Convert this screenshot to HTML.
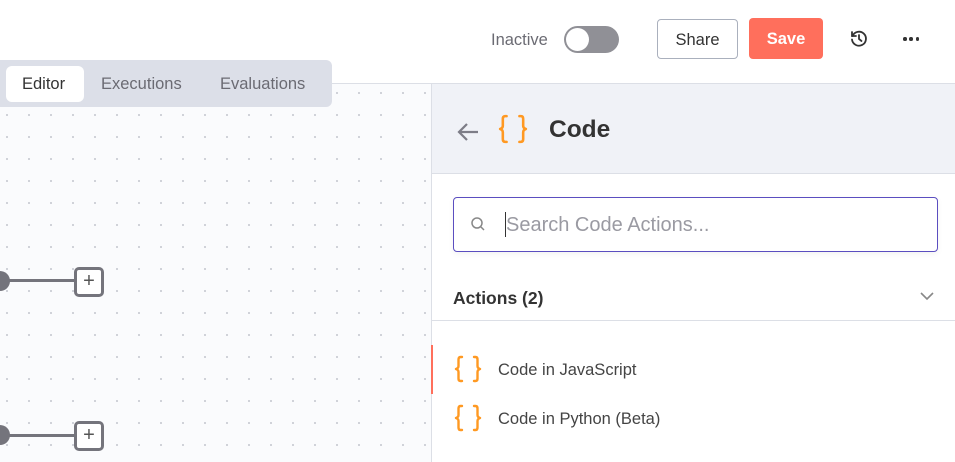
<!DOCTYPE html>
<html><head><style>
*{box-sizing:border-box;margin:0;padding:0}
body{width:955px;height:462px;overflow:hidden;background:#fff;font-family:"Liberation Sans",sans-serif;position:relative;color:#333}
.abs{position:absolute}
.canvas{left:0;top:84px;width:431px;height:378px;background-color:#fafbfd;background-image:radial-gradient(circle,#c4c7cf 0.8px,transparent 1.1px);background-size:22px 22px;background-position:-4px -2px}
</style></head><body>
<svg width="0" height="0" style="position:absolute"><defs><g id="br" fill="none" stroke="#ff9922" stroke-width="2.4" stroke-linecap="round" stroke-linejoin="round"><path d="M8 2H6.5C5 2 4.5 3 4.5 4.5V11C4.5 12.5 3.5 13.5 2 14C3.5 14.5 4.5 15.5 4.5 17V23.5C4.5 25 5 26 6.5 26H8"/><path d="M20 2H21.5C23 2 23.5 3 23.5 4.5V11C23.5 12.5 24.5 13.5 26 14C24.5 14.5 23.5 15.5 23.5 17V23.5C23.5 25 23 26 21.5 26H20"/></g></defs></svg>
<div class="abs" style="left:0;top:83px;width:955px;height:1px;background:#dcdfe6"></div>
<div class="abs canvas"></div>
<div class="abs" style="left:0;top:60px;width:332px;height:47px;background:#dcdfe8;border-radius:0 6px 6px 0"></div>
<div class="abs" style="left:6px;top:66px;width:78px;height:36px;background:#fff;border-radius:6px"></div>
<div class="abs" style="left:22px;top:75px;font-size:16.5px;color:#333">Editor</div>
<div class="abs" style="left:101px;top:75px;font-size:16.5px;color:#6b6b73">Executions</div>
<div class="abs" style="left:220px;top:75px;font-size:16.5px;color:#6b6b73">Evaluations</div>

<div class="abs" style="left:491px;top:31px;font-size:16.5px;color:#6b6b73">Inactive</div>
<div class="abs" style="left:564px;top:26px;width:55px;height:27px;background:#909096;border-radius:14px"></div>
<div class="abs" style="left:566px;top:28px;width:23px;height:23px;background:#fff;border-radius:50%"></div>
<div class="abs" style="left:657px;top:19px;width:81px;height:40px;border:1px solid #aab0bd;border-radius:4px;font-size:16.5px;text-align:center;line-height:40px;color:#333">Share</div>
<div class="abs" style="left:749px;top:18px;width:74px;height:41px;background:#ff6f5c;border-radius:4px;font-size:16.5px;font-weight:bold;text-align:center;line-height:43px;color:#fff">Save</div>
<svg class="abs" style="left:849px;top:29px" width="20" height="20" viewBox="0 0 20 20" fill="none" stroke="#333" stroke-width="1.8" stroke-linecap="round"><path d="M3.5 7A7 7 0 1 1 3 10.5"/><path d="M3 3v4h4"/><path d="M10 6v4l2.5 2"/></svg>
<div class="abs" style="left:903px;top:37px;width:16px;height:4px;display:flex;justify-content:space-between"><i style="width:3.5px;height:3.5px;background:#333;border-radius:50%"></i><i style="width:3.5px;height:3.5px;background:#333;border-radius:50%"></i><i style="width:3.5px;height:3.5px;background:#333;border-radius:50%"></i></div>

<div class="abs" style="left:-10px;top:271px;width:20px;height:20px;border-radius:50%;background:#74747c"></div>
<div class="abs" style="left:8px;top:279px;width:67px;height:3px;background:#74747c"></div>
<div class="abs" style="left:74px;top:267px;width:30px;height:30px;border:3px solid #74747c;border-radius:5px;background:#fff;text-align:center;line-height:22px;font-size:20px;color:#555">+</div>
<div class="abs" style="left:-10px;top:425px;width:20px;height:20px;border-radius:50%;background:#74747c"></div>
<div class="abs" style="left:8px;top:434px;width:67px;height:3px;background:#74747c"></div>
<div class="abs" style="left:74px;top:421px;width:30px;height:30px;border:3px solid #74747c;border-radius:5px;background:#fff;text-align:center;line-height:22px;font-size:20px;color:#555">+</div>

<div class="abs" style="left:431px;top:84px;width:524px;height:378px;background:#fff;border-left:1px solid #dcdfe6"></div>
<div class="abs" style="left:432px;top:84px;width:523px;height:90px;background:#f0f2f7;border-bottom:1px solid #dcdfe6"></div>
<svg class="abs" style="left:456px;top:121px" width="24" height="22" viewBox="0 0 24 22" fill="none" stroke="#7d7d87" stroke-width="2.2"><path d="M22 11H3M11 3l-8 8 8 8"/></svg>
<svg class="abs" style="left:498px;top:114px" width="30" height="30" viewBox="0 0 28 28"><use href="#br"/></svg>
<div class="abs" style="left:549px;top:116px;font-size:24.5px;font-weight:bold;color:#333">Code</div>
<div class="abs" style="left:453px;top:197px;width:485px;height:55px;border:1px solid #5b4ec0;border-radius:4px;box-shadow:0 2px 6px rgba(0,0,0,.05)"></div>
<svg class="abs" style="left:470px;top:216px" width="16" height="16" viewBox="0 0 16 16" fill="none" stroke="#888" stroke-width="1.5"><circle cx="7" cy="7" r="5"/><path d="M11 11l3 3"/></svg>
<div class="abs" style="left:505px;top:212px;width:1px;height:25px;background:#333"></div>
<div class="abs" style="left:506px;top:214px;font-size:20px;color:#9a9aa2">Search Code Actions...</div>
<div class="abs" style="left:453px;top:288px;font-size:17.5px;font-weight:bold;color:#333">Actions (2)</div>
<svg class="abs" style="left:919px;top:290px" width="16" height="12" viewBox="0 0 16 12" fill="none" stroke="#888" stroke-width="1.6"><path d="M2 3l6 6 6-6"/></svg>
<div class="abs" style="left:432px;top:320px;width:523px;height:1px;background:#dcdfe6"></div>
<div class="abs" style="left:431px;top:345px;width:2px;height:49px;background:#ff6f5c"></div>
<svg class="abs" style="left:454px;top:354px" width="28" height="30" viewBox="0 0 28 28"><use href="#br"/></svg>
<div class="abs" style="left:498px;top:361px;font-size:16.5px;color:#444">Code in JavaScript</div>
<svg class="abs" style="left:454px;top:403px" width="28" height="30" viewBox="0 0 28 28"><use href="#br"/></svg>
<div class="abs" style="left:498px;top:410px;font-size:16.5px;color:#444">Code in Python (Beta)</div>
</body></html>
